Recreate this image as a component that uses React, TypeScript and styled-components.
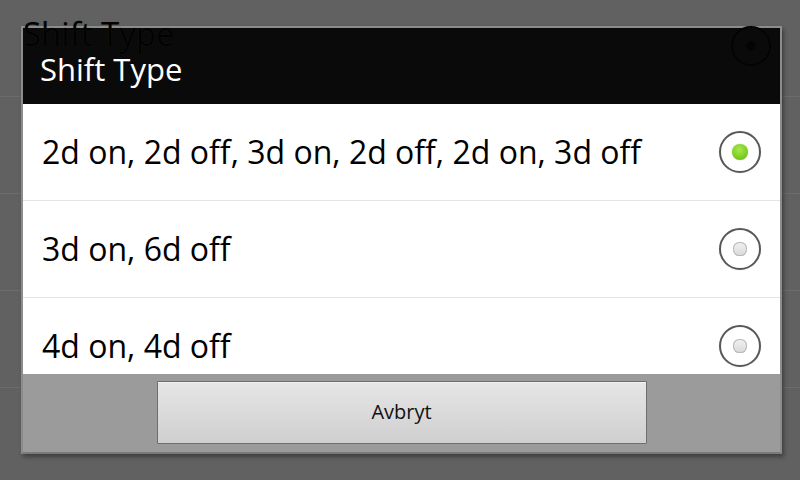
import React from "react";
import styled, { createGlobalStyle } from "styled-components";

const Global = createGlobalStyle`
  html, body { margin: 0; padding: 0; }
  body {
    width: 800px;
    height: 480px;
    overflow: hidden;
    background: #616161;
    font-family: "Open Sans", "Noto Sans", "DejaVu Sans", sans-serif;
  }
`;

const Screen = styled.div`
  position: relative;
  width: 800px;
  height: 480px;
  background: #616161;
  overflow: hidden;
`;

const BackList = styled.div`
  display: flex;
  flex-direction: column;
`;

const GhostRow = styled.div`
  height: 96px;
  display: flex;
  align-items: flex-start;
  justify-content: space-between;
  padding: 14px 29px 0 23px;
  box-sizing: border-box;
  position: relative;
  z-index: 2;
  pointer-events: none;
`;

const BackRow = styled.div`
  height: 97px;
  border-top: 1px solid #6c6c6c;
  box-sizing: border-box;
`;

const BackTitle = styled.div`
  font-size: 33px;
  line-height: 40px;
  color: #020202;
  text-shadow: 0 0 1px rgba(60, 60, 60, 0.45);
`;

const BackRadio = styled.div`
  width: 40px;
  height: 40px;
  margin-top: 12px;
  border-radius: 50%;
  border: 2px solid #030303;
  box-shadow: 0 0 1px rgba(45, 45, 45, 0.6), inset 0 0 1px rgba(45, 45, 45, 0.5);
  box-sizing: border-box;
  display: flex;
  align-items: center;
  justify-content: center;
`;

const BackDot = styled.div`
  width: 10px;
  height: 10px;
  border-radius: 50%;
  background: #040404;
  box-shadow: 0 0 1px rgba(40, 40, 40, 0.5);
`;

const Overlay = styled.div`
  position: absolute;
  left: 21px;
  top: 26px;
  width: 761px;
  height: 428px;
  box-sizing: border-box;
  border: 2px solid #8c8c8c;
  border-bottom-color: #7a7a7a;
  box-shadow: 2px 3px 4px rgba(0, 0, 0, 0.35);
  display: flex;
  flex-direction: column;
  background: #9b9b9b;
  z-index: 1;
`;

const TitleBar = styled.div`
  height: 76px;
  background: #0a0a0a;
  color: #ffffff;
  font-size: 31px;
  display: flex;
  align-items: center;
  padding-left: 17px;
  padding-top: 6px;
  box-sizing: border-box;
`;

const TitleText = styled.span`
  position: relative;
  z-index: 3;
`;

const List = styled.div`
  height: 270px;
  background: #ffffff;
  overflow: hidden;
  display: flex;
  flex-direction: column;
`;

const Row = styled.div`
  flex: 0 0 96px;
  display: flex;
  align-items: center;
  justify-content: space-between;
  padding: 0 19px 0 19px;
  border-bottom: 1px solid #e4e4e4;
`;

const RowText = styled.div`
  font-size: 32px;
  color: #000000;
  padding-bottom: 1px;
`;

const Radio = styled.div`
  width: 42px;
  height: 42px;
  box-sizing: border-box;
  border-radius: 50%;
  border: 2px solid #585858;
  background: #ffffff;
  display: flex;
  align-items: center;
  justify-content: center;
  box-shadow: 0 0 2px rgba(0, 0, 0, 0.08);
`;

const Dot = styled.div<{ $on: boolean }>`
  width: ${(p) => (p.$on ? 16 : 14)}px;
  height: ${(p) => (p.$on ? 16 : 14)}px;
  border-radius: ${(p) => (p.$on ? "50%" : "45%")};
  background: ${(p) =>
    p.$on
      ? "radial-gradient(circle at 45% 35%, #a8e84e 0%, #7fcf24 55%, #5fae12 100%)"
      : "linear-gradient(#f2f2f2, #d8d8d8)"};
  box-shadow: ${(p) =>
    p.$on ? "0 0 1px rgba(60,120,0,0.6)" : "inset 0 0 0 1px #b8b8b8"};
`;

const ButtonBar = styled.div`
  flex: 1;
  display: flex;
  justify-content: center;
  padding-top: 7px;
  background: #9b9b9b;
`;

const Button = styled.button`
  width: 490px;
  height: 63px;
  border: 1px solid #6e6e6e;
  border-radius: 1px;
  background: linear-gradient(to bottom, #e6e6e6, #cfcfcf);
  box-shadow: inset 0 1px 0 #f2f2f2;
  font-family: "Open Sans", "Noto Sans", "DejaVu Sans", sans-serif;
  font-size: 20px;
  color: #111111;
  padding: 0 0 2px 0;
`;

const options = [
  { label: "2d on, 2d off, 3d on, 2d off, 2d on, 3d off", on: true },
  { label: "3d on, 6d off", on: false },
  { label: "4d on, 4d off", on: false },
];

export default function App() {
  return (
    <Screen>
      <Global />
      <BackList>
        <GhostRow>
          <BackTitle>Shift Type</BackTitle>
          <BackRadio>
            <BackDot />
          </BackRadio>
        </GhostRow>
        <BackRow />
        <BackRow />
        <BackRow />
        <BackRow />
      </BackList>
      <Overlay>
        <TitleBar>
          <TitleText>Shift Type</TitleText>
        </TitleBar>
        <List>
          {options.map((o) => (
            <Row key={o.label}>
              <RowText>{o.label}</RowText>
              <Radio>
                <Dot $on={o.on} />
              </Radio>
            </Row>
          ))}
        </List>
        <ButtonBar>
          <Button>Avbryt</Button>
        </ButtonBar>
      </Overlay>
    </Screen>
  );
}
